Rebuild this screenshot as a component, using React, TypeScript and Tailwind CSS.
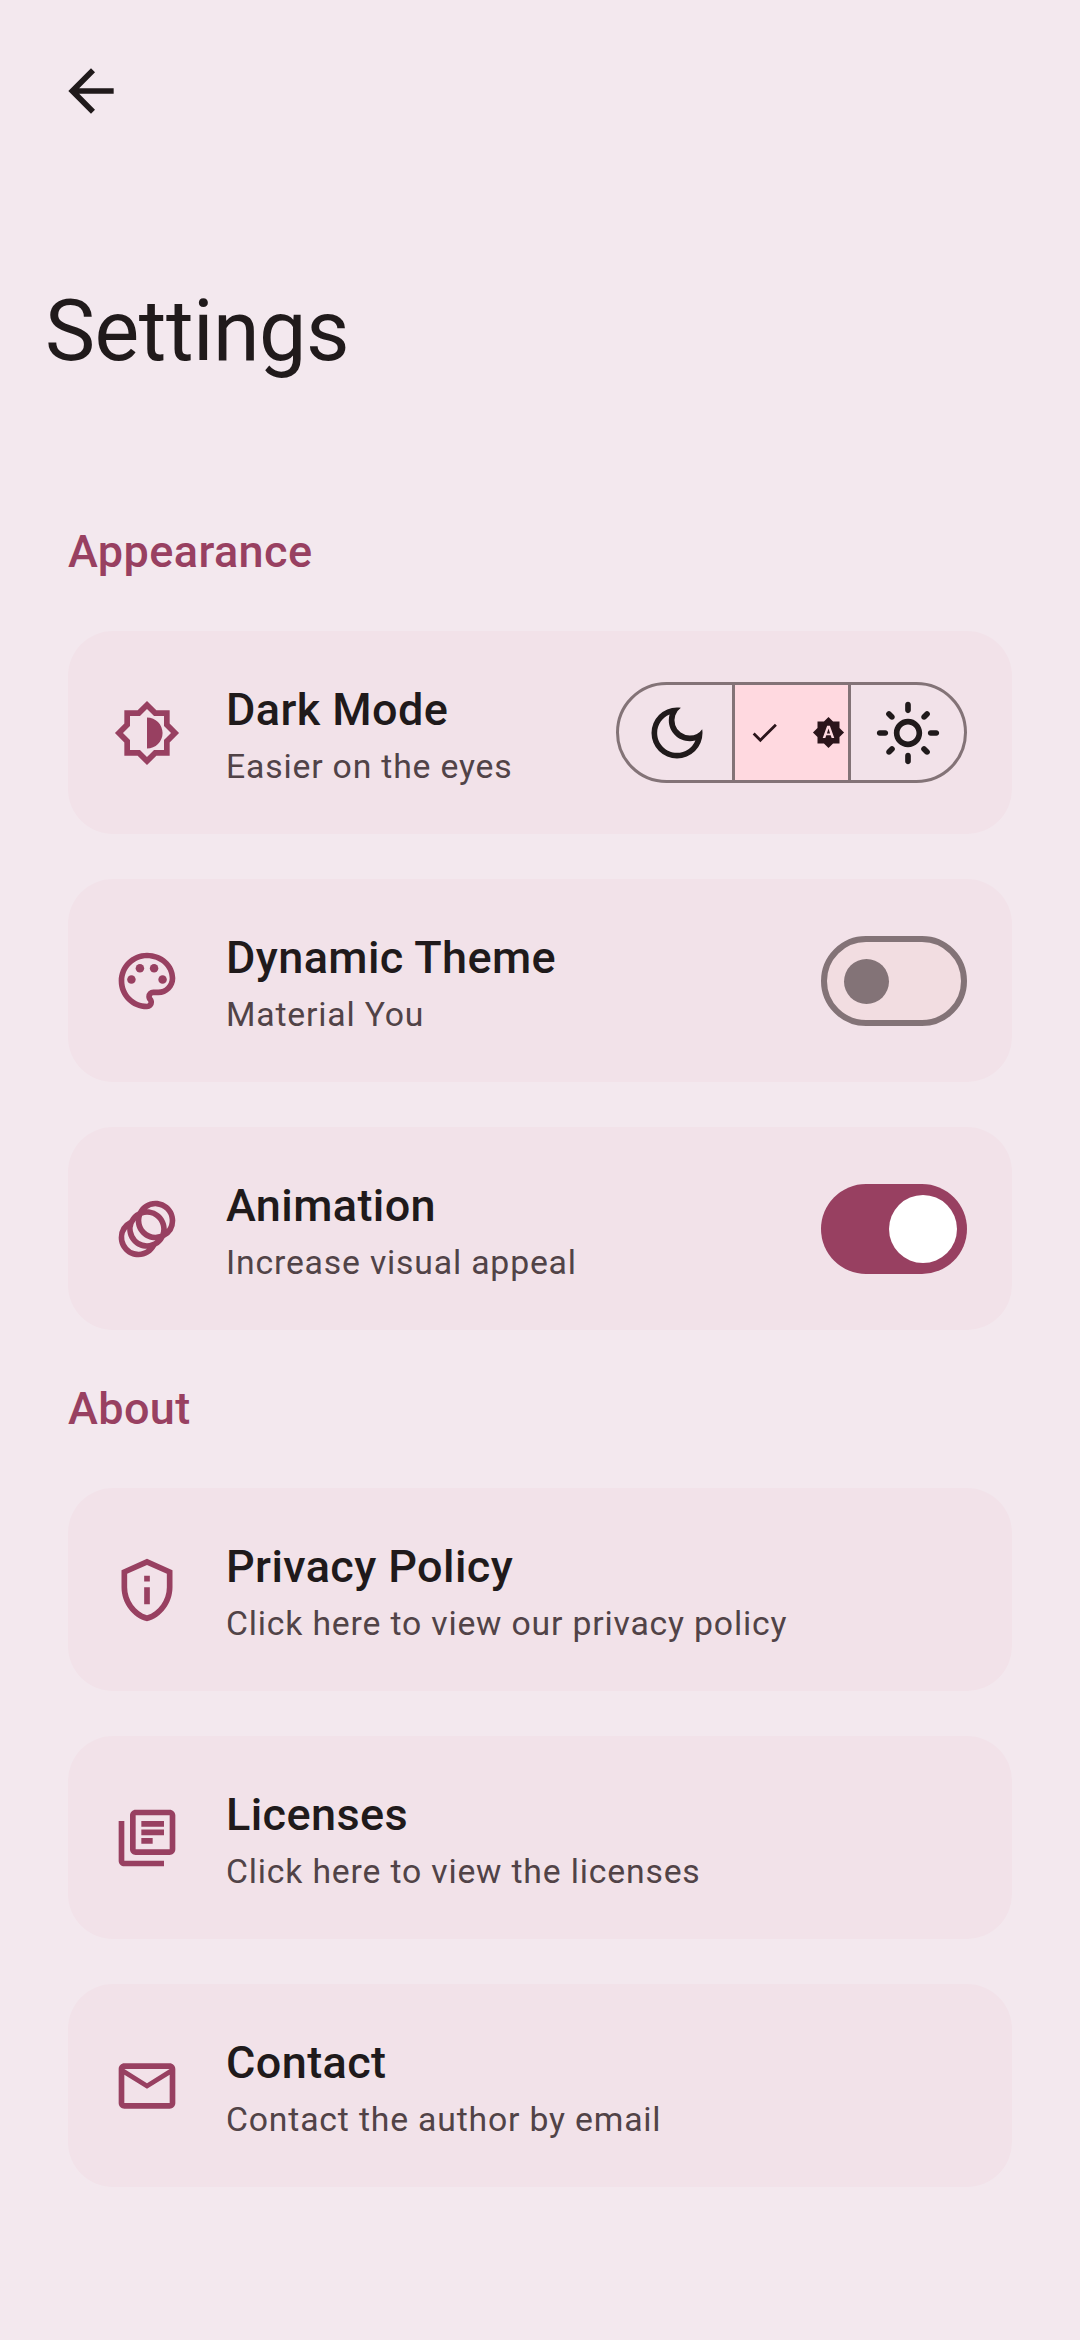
import type { ReactNode } from "react";
import {
  MdArrowBack,
  MdCheck,
  MdOutlineAnimation,
  MdOutlineDarkMode,
  MdOutlineLibraryBooks,
  MdOutlineLightMode,
  MdOutlineMail,
  MdOutlinePalette,
  MdOutlinePrivacyTip,
} from "react-icons/md";

function BrightnessIcon() {
  return (
    <svg viewBox="0 0 24 24" fill="currentColor" className="size-full">
      <path d="M20 15.31 23.31 12 20 8.69V4h-4.69L12 .69 8.69 4H4v4.69L.69 12 4 15.31V20h4.69L12 23.31 15.31 20H20v-4.69zm-2-.83V18h-3.52L12 20.48 9.52 18H6v-3.52L3.52 12 6 9.52V6h3.52L12 3.52 14.48 6H18v3.52L20.48 12 18 14.48zM12 6.5v11c3.04 0 5.5-2.46 5.5-5.5S15.04 6.5 12 6.5z" />
    </svg>
  );
}

function AutoBrightnessIcon() {
  return (
    <svg viewBox="0 0 24 24" fill="currentColor" className="size-[33px] shrink-0">
      <path d="M10.85 12.65h2.3L12 9l-1.15 3.65zM20 8.69V4h-4.69L12 .69 8.69 4H4v4.69L.69 12 4 15.31V20h4.69L12 23.31 15.31 20H20v-4.69L23.31 12 20 8.69zM14.3 16l-.7-2h-3.2l-.7 2H7.8L11 7h2l3.2 9h-1.9z" />
    </svg>
  );
}

function ThemePicker() {
  return (
    <div className="flex h-[101px] w-[351px] overflow-hidden rounded-full border-3 border-[#837377] text-[#201a1b]">
      <button className="flex w-[113px] items-center justify-center pl-[2px]">
        <MdOutlineDarkMode className="size-[68px]" />
      </button>
      <button className="flex w-[119px] items-center justify-between border-x-3 border-[#837377] bg-[#ffd9e0] pr-[3px] pl-[13px] text-[#2b151b]">
        <MdCheck className="size-[33px]" />
        <AutoBrightnessIcon />
      </button>
      <button className="flex w-[113px] items-center justify-center">
        <MdOutlineLightMode className="size-[68px]" />
      </button>
    </div>
  );
}

function Switch({ on }: { on: boolean }) {
  return on ? (
    <button className="mt-px flex h-[90px] w-[146px] items-center justify-end rounded-full bg-[#984061] pr-[10px]">
      <span className="size-[68px] rounded-full bg-white" />
    </button>
  ) : (
    <button className="mt-px flex h-[90px] w-[146px] items-center rounded-full border-6 border-[#837377] bg-[#f2dde1] pl-[17px]">
      <span className="size-[45px] rounded-full bg-[#837377]" />
    </button>
  );
}

type RowProps = { icon: ReactNode; title: string; text: string; children?: ReactNode };

function Row({ icon, title, text, children }: RowProps) {
  return (
    <div className="flex h-[203px] items-center rounded-[45px] bg-[#f2e2e9] px-[45px]">
      <div className="size-[68px] shrink-0 text-[#984061]">{icon}</div>
      <div className="ml-[45px] flex-1">
        <div className="text-[45px] leading-[68px] font-medium tracking-[0.4px] text-[#201a1b]">{title}</div>
        <div className="text-[33.75px] leading-[45px] tracking-[0.82px] text-[#514347]">{text}</div>
      </div>
      {children}
    </div>
  );
}

function Section({ title, children }: { title: string; children: ReactNode }) {
  return (
    <section className="flex flex-col gap-[45px]">
      <h2 className="text-[45px] leading-[68px] font-medium tracking-[0.4px] text-[#984061]">{title}</h2>
      {children}
    </section>
  );
}

export default function App() {
  return (
    <main className="h-[2340px] w-[1080px] overflow-hidden bg-[#f3e8ee] font-[Roboto,sans-serif]">
      <header className="px-[45px] pt-[57px] text-[#201a1b]">
        <MdArrowBack className="ml-[12px] size-[68px]" />
        <h1 className="mt-[157px] text-[84.375px] leading-[100px] tracking-[-0.5px]">Settings</h1>
      </header>
      <div className="mt-[136px] flex flex-col gap-[45px] px-[68px]">
        <Section title="Appearance">
          <Row icon={<BrightnessIcon />} title="Dark Mode" text="Easier on the eyes">
            <ThemePicker />
          </Row>
          <Row icon={<MdOutlinePalette className="size-full" />} title="Dynamic Theme" text="Material You">
            <Switch on={false} />
          </Row>
          <Row icon={<MdOutlineAnimation className="size-full" />} title="Animation" text="Increase visual appeal">
            <Switch on />
          </Row>
        </Section>
        <Section title="About">
          <Row
            icon={<MdOutlinePrivacyTip className="size-full" />}
            title="Privacy Policy"
            text="Click here to view our privacy policy"
          />
          <Row
            icon={<MdOutlineLibraryBooks className="size-full" />}
            title="Licenses"
            text="Click here to view the licenses"
          />
          <Row icon={<MdOutlineMail className="size-full" />} title="Contact" text="Contact the author by email" />
        </Section>
      </div>
    </main>
  );
}
